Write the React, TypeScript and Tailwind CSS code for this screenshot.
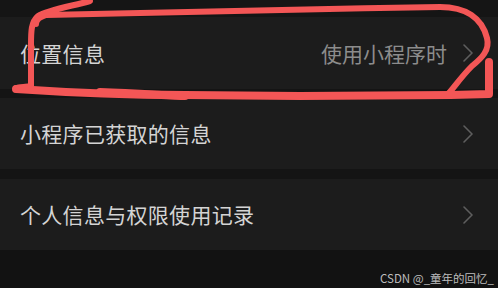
import React from "react";

const font = { fontFamily: '"Noto Sans CJK SC", "Noto Sans", sans-serif' };

function Chevron() {
  return (
    <svg width="10" height="18" viewBox="0 0 10 18" className="shrink-0">
      <polyline points="1,1 9,9 1,17" fill="none" stroke="#5e5e5e" strokeWidth="1.6" strokeLinecap="round" strokeLinejoin="round" />
    </svg>
  );
}

function Row({ label, value, h }: { label: string; value?: string; h: string }) {
  return (
    <div className={`flex items-center justify-between bg-[#1c1c1c] pl-[20px] pr-[25px] ${h}`}>
      <span className="text-[21px] text-[#d4d4d4] leading-none tracking-[0.3px]">{label}</span>
      <div className="flex items-center gap-[16px]">
        {value && <span className="text-[21px] text-[#8c8c8c] leading-none">{value}</span>}
        <Chevron />
      </div>
    </div>
  );
}

export default function App() {
  return (
    <div className="relative w-[498px] h-[288px] bg-[#121212] flex flex-col overflow-hidden" style={font}>
      <div className="h-[17px] bg-[#151515]" />
      <Row label="位置信息" value="使用小程序时" h="h-[72px]" />
      <div className="h-[9px] bg-[#141414]" />
      <Row label="小程序已获取的信息" h="h-[71px]" />
      <div className="h-[10px] bg-[#141414]" />
      <Row label="个人信息与权限使用记录" h="h-[71px]" />
      <div className="flex-1 flex items-end justify-end pr-[4px] pb-[4px]">
        <span className="text-[11.5px] text-[#bdbdbd] leading-none" style={{ fontFamily: '"Noto Sans CJK SC", sans-serif' }}>CSDN @_童年的回忆_</span>
      </div>
      <svg className="absolute inset-0 pointer-events-none" width="498" height="288" viewBox="0 0 498 288">
        <g fill="none" stroke="#f35656" strokeLinecap="round" strokeLinejoin="round">
          <path d="M 90 1 C 72 6 48 10 38 16 C 31 22 31 32 31 45 L 31 86 C 25 87 19 87 16 88" strokeWidth="6" />
          <path d="M 36 24 C 36 20 40 17 46 15 C 150 12 300 9 440 7 C 466 7 482 18 487 38 C 490 50 482 58 472 66 C 462 76 455 86 449 93" strokeWidth="6" />
          <path d="M 16 89 C 60 92 120 95 185 95 L 300 96 L 451 95 L 489 94 L 489 62" strokeWidth="8" />
          <path d="M 100 92 C 140 93 170 96 185 96" strokeWidth="8" />
        </g>
      </svg>
    </div>
  );
}
